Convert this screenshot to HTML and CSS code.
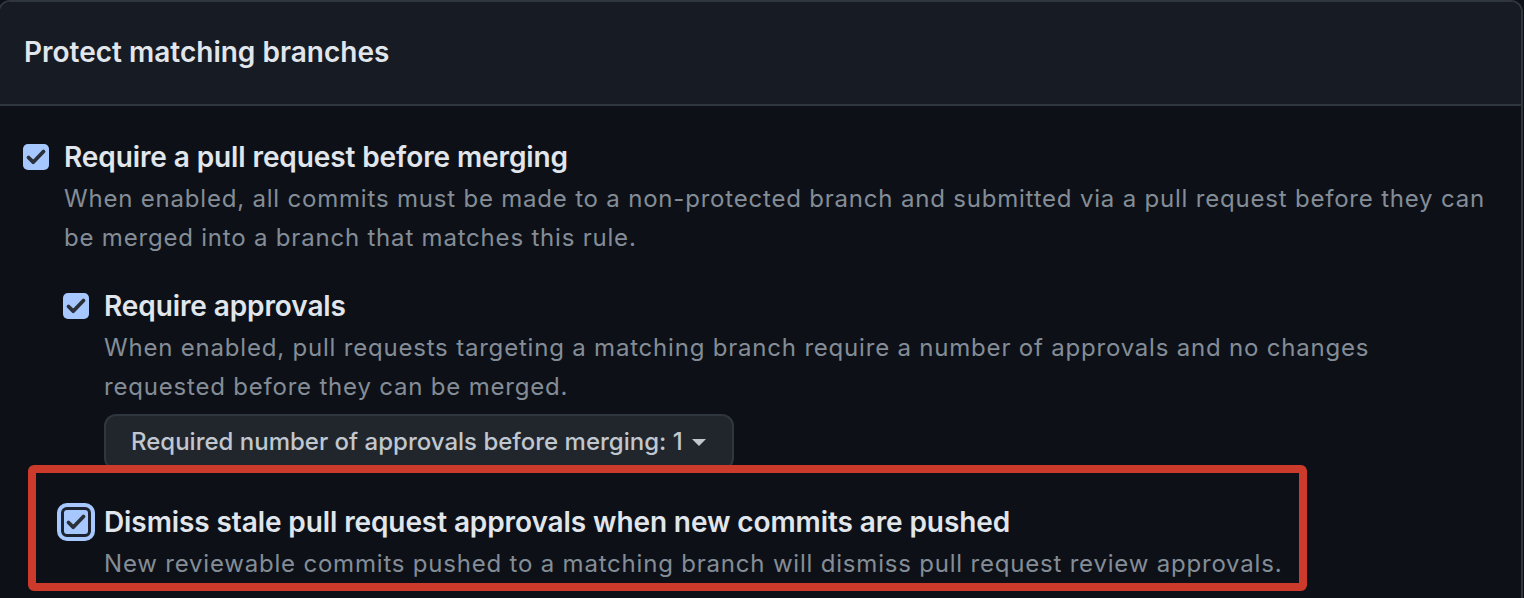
FILE: index.html
```html
<!DOCTYPE html>
<html lang="en">
<head>
<meta charset="utf-8">
<title>Protect matching branches</title>
<link rel="stylesheet" href="styles.css">
</head>
<body>
<section class="box">
  <header class="box-header">
    <h3 class="box-title">Protect matching branches</h3>
  </header>
  <div class="box-body">
    <div class="opt">
      <span class="cb"><svg viewBox="0 0 26 26" width="26" height="26"><path d="M5.5 13.5 L10.2 18.2 L20.5 7.5"/></svg></span>
      <div class="opt-main">
        <div class="opt-title">Require a pull request before merging</div>
        <p class="note note-top">When enabled, all commits must be made to a non-protected branch and submitted via a pull request before they can be merged into a branch that matches this rule.</p>

        <div class="opt nested">
          <span class="cb"><svg viewBox="0 0 26 26" width="26" height="26"><path d="M5.5 13.5 L10.2 18.2 L20.5 7.5"/></svg></span>
          <div class="opt-main">
            <div class="opt-title">Require approvals</div>
            <p class="note">When enabled, pull requests targeting a matching branch require a number of approvals and no changes requested before they can be merged.</p>
            <button class="select-btn" type="button">Required number of approvals before merging: 1<span class="caret"></span></button>
          </div>
        </div>

        <div class="opt nested nested-last">
          <span class="cb cb-focus"><svg viewBox="0 0 24 24" width="24" height="24"><path d="M4.5 12.5 L9.2 17.2 L19.5 6.5"/></svg></span>
          <div class="opt-main">
            <div class="opt-title">Dismiss stale pull request approvals when new commits are pushed</div>
            <p class="note">New reviewable commits pushed to a matching branch will dismiss pull request review approvals.</p>
          </div>
        </div>
      </div>
    </div>
  </div>
  <div class="annotation" aria-hidden="true"></div>
</section>
</body>
</html>
```

FILE: styles.css
```css
* { box-sizing: border-box; }

html, body {
  margin: 0;
  padding: 0;
  background: #0d1117;
  font-family: "Inter", "Liberation Sans", sans-serif;
  overflow: hidden;
}

.box {
  position: relative;
  margin: 0 1px 0 -2px;
  border: 2px solid #30363d;
  border-radius: 12px 12px 0 0;
  background: #0d1117;
  min-height: 620px;
}

.box-header {
  background: #171b23;
  border-bottom: 2px solid #30363d;
  border-radius: 10px 10px 0 0;
  padding: 30px 24px 32px;
}

.box-title {
  margin: 0;
  font-size: 28px;
  line-height: 40px;
  font-weight: 600;
  color: #e1e6ec;
}

.box-body {
  padding: 31px 20px 0 23px;
}

.opt {
  display: flex;
  gap: 15px;
  align-items: flex-start;
}

.opt-main {
  flex: 1;
  min-width: 0;
}

.nested {
  margin-top: 29px;
  margin-left: -1px;
  padding-right: 40px;
}

.nested-last {
  margin-top: 32px;
}

.cb {
  flex: none;
  width: 26px;
  height: 26px;
  margin-top: 7px;
  border-radius: 5px;
  background: #a6c8ff;
  display: flex;
  align-items: center;
  justify-content: center;
}

.cb svg path {
  fill: none;
  stroke: #2b3038;
  stroke-width: 3.8;
  stroke-linecap: round;
  stroke-linejoin: round;
}

.cb-focus {
  width: 30px;
  height: 30px;
  margin-top: 5px;
  margin-left: -2px;
  margin-right: -2px;
  border: 3px solid #1c2230;
  border-radius: 6px;
  outline: 4px solid #a6c8ff;
  outline-offset: 0;
}

.opt-title {
  font-size: 28px;
  line-height: 40px;
  font-weight: 600;
  letter-spacing: -0.1px;
  color: #e1e6ec;
}

.note {
  margin: 2px 0 0;
  font-size: 24px;
  line-height: 39px;
  letter-spacing: 0.8px;
  color: #848d97;
}

.select-btn {
  display: inline-flex;
  align-items: center;
  margin-top: 8px;
  padding: 11px 26px 11px 25px;
  border: 2px solid #30363d;
  border-radius: 12px;
  background: #21262d;
  color: #c0c7cf;
  font-family: inherit;
  font-size: 24px;
  line-height: 30px;
  font-weight: 500;
}

.caret {
  display: inline-block;
  width: 0;
  height: 0;
  margin-left: 9px;
  border-left: 7px solid transparent;
  border-right: 7px solid transparent;
  border-top: 7px solid #c0c7cf;
}

.annotation {
  position: absolute;
  left: 28px;
  top: 463px;
  width: 1279px;
  height: 126px;
  border: 8px solid #cc3a2c;
  border-radius: 6px;
  pointer-events: none;
}
```
